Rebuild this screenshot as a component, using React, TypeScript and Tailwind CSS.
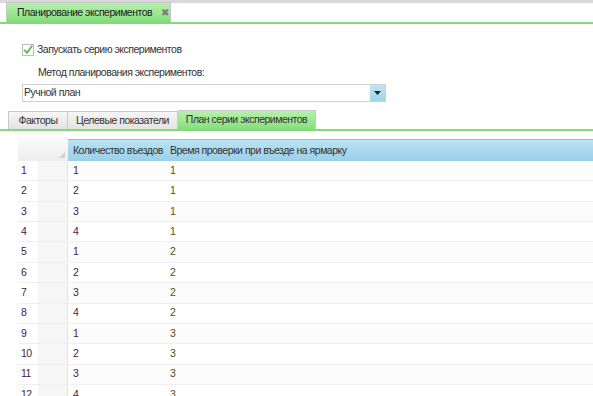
import React from 'react';

const rows = [
  [1, 1], [2, 1], [3, 1], [4, 1],
  [1, 2], [2, 2], [3, 2], [4, 2],
  [1, 3], [2, 3], [3, 3], [4, 3],
];

const App: React.FC = () => {
  return (
    <div
      className="w-[593px] h-[396px] overflow-hidden bg-white text-[10.5px] tracking-[-0.5px] text-[#333] whitespace-nowrap"
      style={{ fontFamily: '"Liberation Sans", Arial, sans-serif' }}
    >
      {/* Document tab strip */}
      <div className="h-[3px] bg-[#d9d9d9]" />
      <div className="flex items-end h-[21px] pl-[6px] border-b-2 border-[#7fdc76]">
        <div className="flex items-center gap-[9px] w-[165px] h-[20px] pl-[10px] border border-b-0 border-[#c8c8c8] bg-gradient-to-b from-[#b6f0ad] to-[#82de79]">
          <span className="text-[#222]">Планирование экспериментов</span>
          <span className="text-[#7a7a7a] text-[10px] leading-none">✖</span>
        </div>
      </div>

      {/* Settings */}
      <div className="pl-[22px] pt-[19px]">
        <div className="flex items-center gap-[3px] h-[14px]">
          <div className="w-[12px] h-[12px] border border-[#bdbdbd] bg-white flex items-center justify-center">
            <svg width="12" height="12" viewBox="0 0 12 12">
              <path d="M2 6.5 L4.8 9.5 L10.5 1.5" fill="none" stroke="#5cc24e" strokeWidth="2.4" strokeLinecap="round" strokeLinejoin="round" />
            </svg>
          </div>
          <span>Запускать серию экспериментов</span>
        </div>
        <div className="pl-[16px] mt-[8px] h-[14px] leading-[14px]">Метод планирования экспериментов:</div>
        <div className="mt-[5px] w-[364px] h-[18px] border border-[#cfcfcf] flex items-center justify-between">
          <span className="pl-[1px]">Ручной план</span>
          <div className="w-[15px] h-full bg-gradient-to-b from-[#bfe6f5] to-[#9fd3ea] flex items-center justify-center">
            <svg width="7" height="4" viewBox="0 0 7 4">
              <path d="M0 0 L7 0 L3.5 4 Z" fill="#222" />
            </svg>
          </div>
        </div>
      </div>

      {/* Sub tabs */}
      <div className="mt-[9px] flex items-end h-[20px] pl-[8px] border-b-2 border-[#7fdc76]">
        <div className="w-[60px] h-[18px] flex items-center justify-center border border-b-0 border-[#c9c9c9] bg-gradient-to-b from-[#f6f6f6] to-[#e3e3e3]">Факторы</div>
        <div className="w-[110px] h-[18px] flex items-center justify-center border border-b-0 border-l-0 border-[#c9c9c9] bg-gradient-to-b from-[#f6f6f6] to-[#e3e3e3]">Целевые показатели</div>
        <div className="w-[138px] h-[19px] flex items-center justify-center border border-b-0 border-l-0 border-[#c9c9c9] bg-gradient-to-b from-[#b6f0ad] to-[#86df7d]">План серии экспериментов</div>
      </div>

      {/* Grid */}
      <div className="mt-[8px] pl-[18px]">
        <div className="flex h-[22px]">
          <div className="w-[50px] bg-gradient-to-b from-[#fafafa] to-[#ededed] relative">
            <svg className="absolute right-[3px] bottom-[3px]" width="6" height="6" viewBox="0 0 6 6">
              <path d="M6 0 L6 6 L0 6 Z" fill="#d0d0d0" />
            </svg>
          </div>
          <div className="flex-1 flex items-center border-t border-[#8cbfe0] bg-gradient-to-b from-[#b8e4f4] to-[#9ccfe8]">
            <div className="w-[102px] pl-[5px]">Количество въездов</div>
            <div>Время проверки при въезде на ярмарку</div>
          </div>
        </div>
        {rows.map(([a, b], i) => (
          <div key={i} className="flex h-[20.36px] border-b border-[#f0f0f0]">
            <div className="w-[50px] flex">
              <div className="w-[20px] pl-[3px] flex items-center text-[#3d1f46]">{i + 1}</div>
              <div className="flex-1 bg-[#f6f6f6] border-r border-[#e4e4e4]" />
            </div>
            <div className={`flex-1 flex items-center ${i % 2 === 0 ? 'bg-[#fcfcfc]' : 'bg-white'}`}>
              <div className="w-[102px] pl-[5px] text-[#4a2040]">{a}</div>
              <div className="text-[#5a4a1a]">{b}</div>
            </div>
          </div>
        ))}
      </div>
    </div>
  );
};

export default App;
